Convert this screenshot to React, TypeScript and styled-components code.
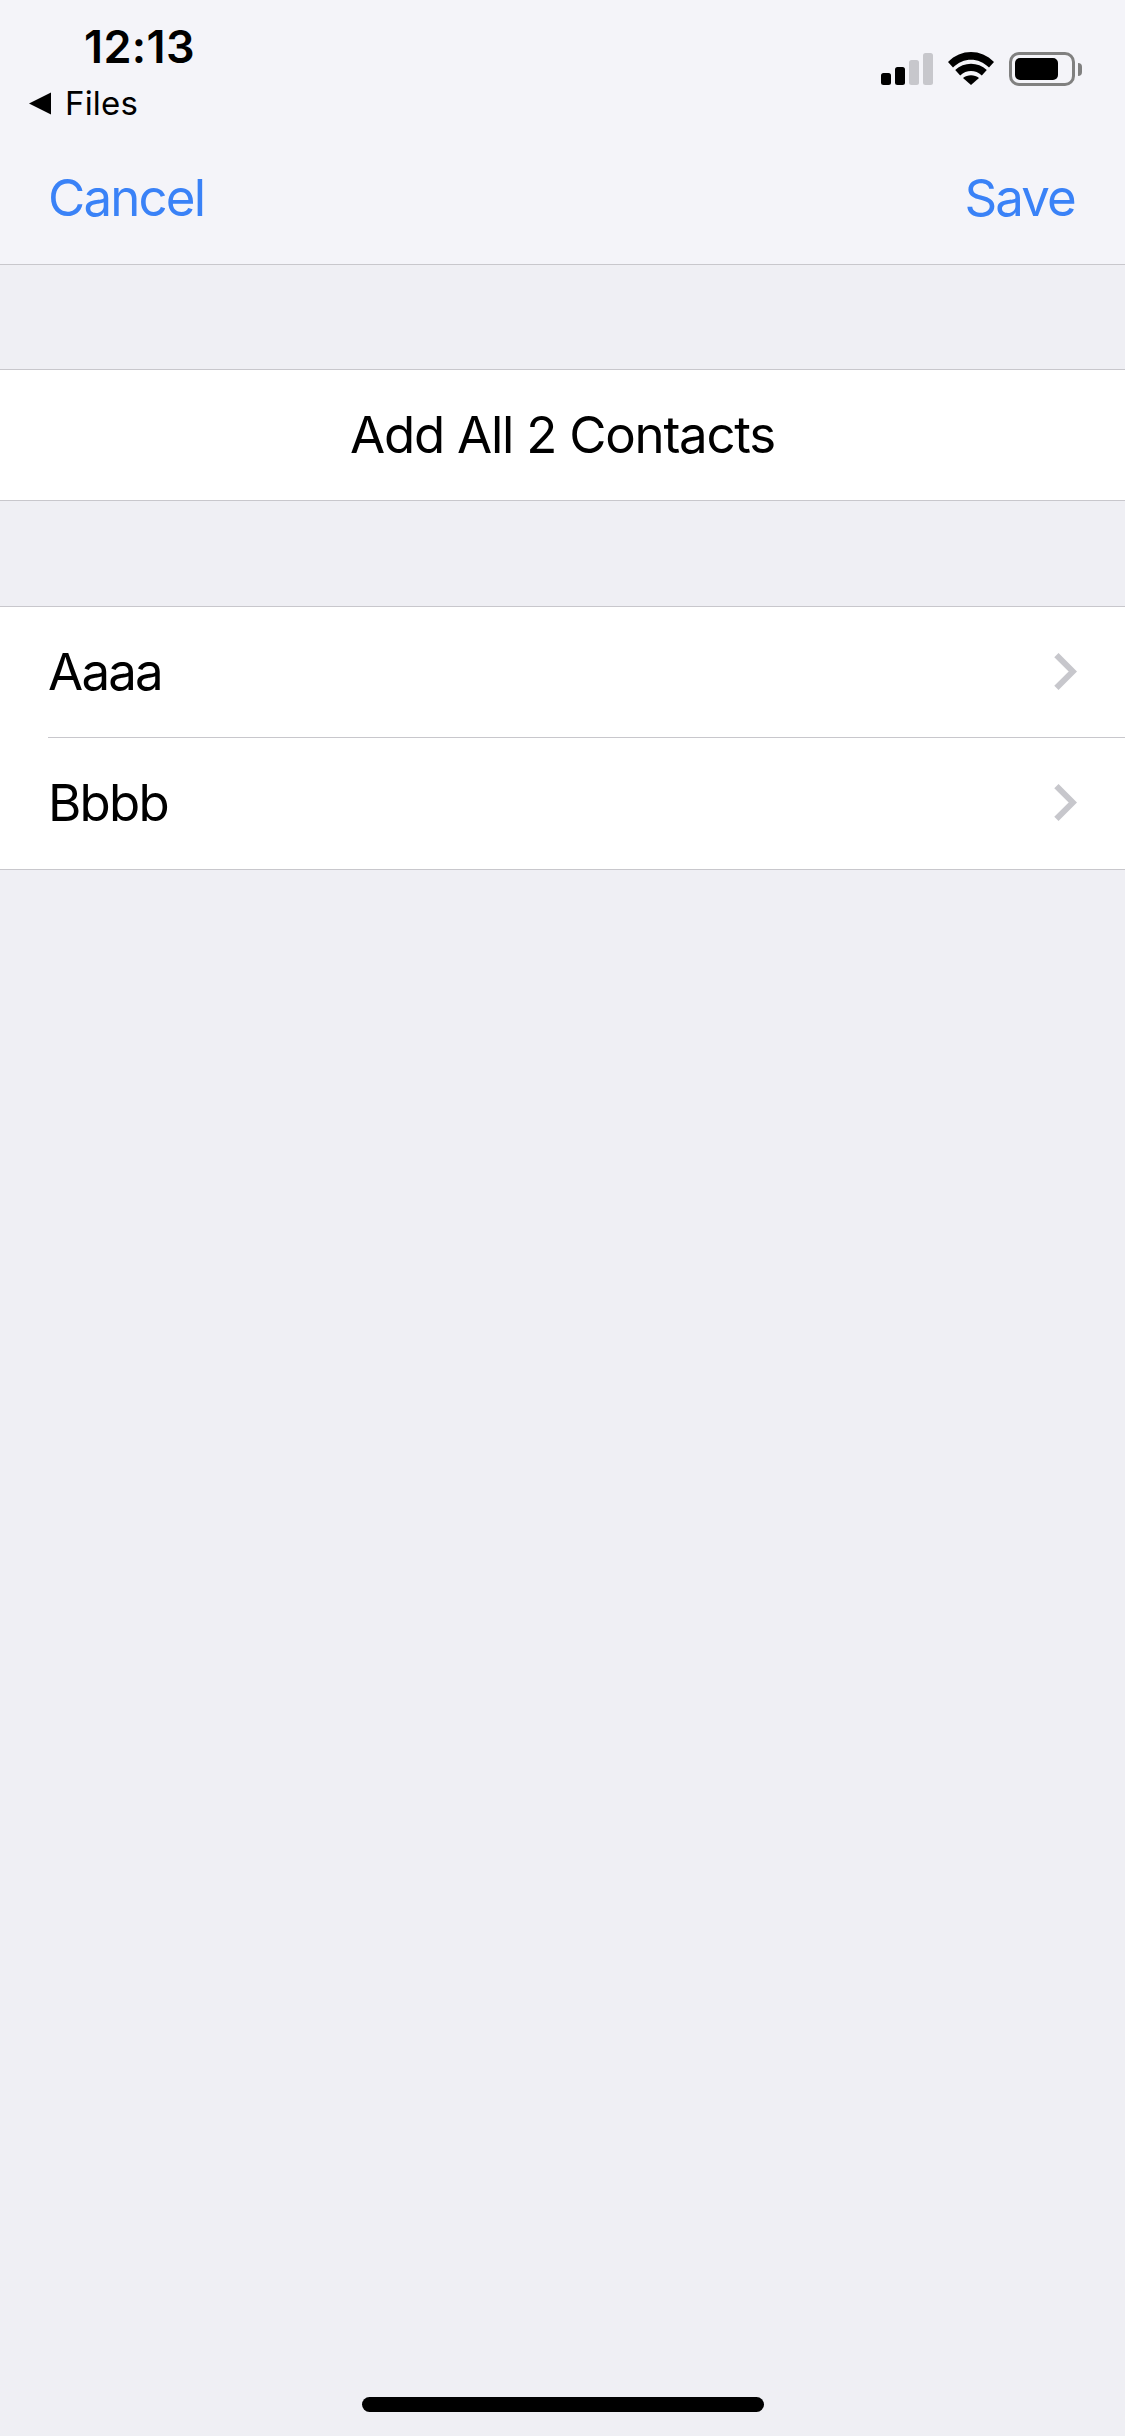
import styled, { createGlobalStyle } from "styled-components";

const GlobalStyle = createGlobalStyle`
  html, body {
    margin: 0;
    padding: 0;
    background: #efeff4;
  }
`;

const contacts = ["Aaaa", "Bbbb"];
const signalBars = [
  { height: 12, on: true },
  { height: 18, on: true },
  { height: 25, on: false },
  { height: 32, on: false },
];

export default function App() {
  return (
    <Page>
      <GlobalStyle />
      <Header>
        <StatusBar>
          <StatusLeft>
            <Time>12:13</Time>
            <BackLink>
              <svg width="23" height="23" viewBox="0 0 23 23">
                <path d="M0 11.5 L22 0.5 V22.5 Z" fill="#000" />
              </svg>
              <BackLabel>Files</BackLabel>
            </BackLink>
          </StatusLeft>
          <StatusRight>
            <Signal>
              {signalBars.map((bar) => (
                <SignalBar key={bar.height} $height={bar.height} $on={bar.on} />
              ))}
            </Signal>
            <svg width="46" height="33" viewBox="0 0 46 33">
              <path d="M0 10 C13 -3.3 33 -3.3 46 10 L41 15.6 C30.5 5.2 15.5 5.2 5 15.6 Z" fill="#000" />
              <path d="M7.2 18 C16 9.7 30 9.7 38.8 18 L33.8 23.4 C27.5 17.6 18.5 17.6 12.2 23.4 Z" fill="#000" />
              <path d="M15 26 C19.5 22.2 26.5 22.2 31 26 L23 33 Z" fill="#000" />
            </svg>
            <Battery>
              <BatteryShell>
                <BatteryLevel />
              </BatteryShell>
              <BatteryTip />
            </Battery>
          </StatusRight>
        </StatusBar>
        <NavBar>
          <NavButton>Cancel</NavButton>
          <NavButton>Save</NavButton>
        </NavBar>
      </Header>

      <Section>
        <CenterRow>Add All 2 Contacts</CenterRow>
      </Section>

      <Section>
        {contacts.map((name) => (
          <ContactRow key={name}>
            <ContactName>{name}</ContactName>
            <svg width="23" height="37" viewBox="0 0 23 37">
              <path d="M2.4 2.1 L18.8 18.5 L2.4 34.9" fill="none" stroke="#c7c7cc" strokeWidth="6" />
            </svg>
          </ContactRow>
        ))}
      </Section>

      <HomeBar />
    </Page>
  );
}

const Page = styled.div`
  position: relative;
  width: 1125px;
  height: 2436px;
  overflow: hidden;
  background: #efeff4;
  color: #000;
  font-family: Inter, "Liberation Sans", sans-serif;
`;

const Header = styled.header`
  height: 264px;
  background: #f4f4f9;
  border-bottom: 1px solid #c8c7cc;
`;

const StatusBar = styled.div`
  height: 130px;
  display: flex;
  justify-content: space-between;
`;

const StatusLeft = styled.div`
  padding: 20px 0 0 29px;
  display: flex;
  flex-direction: column;
`;

const Time = styled.div`
  margin-left: 55px;
  font-size: 45px;
  line-height: 54px;
  font-weight: 600;
  letter-spacing: 0.4px;
`;

const BackLink = styled.div`
  display: flex;
  align-items: center;
  gap: 13px;
  margin-top: 9px;
`;

const BackLabel = styled.span`
  font-size: 33px;
  line-height: 40px;
  letter-spacing: 0.2px;
`;

const StatusRight = styled.div`
  padding: 52px 43px 0 0;
  display: flex;
  align-items: flex-start;
  gap: 15px;
`;

const Signal = styled.div`
  display: flex;
  align-items: flex-end;
  gap: 4px;
  height: 33px;
`;

const SignalBar = styled.span<{ $height: number; $on: boolean }>`
  width: 10px;
  height: ${(p) => p.$height}px;
  border-radius: 2.5px;
  background: ${(p) => (p.$on ? "#000" : "#c7c7cc")};
`;

const Battery = styled.div`
  display: flex;
  align-items: center;
  gap: 3px;
  height: 34px;
`;

const BatteryShell = styled.div`
  box-sizing: border-box;
  width: 66px;
  height: 34px;
  padding: 0 3px;
  display: flex;
  align-items: center;
  border: 3px solid #808080;
  border-radius: 10px;
`;

const BatteryLevel = styled.div`
  width: 43px;
  height: 22px;
  border-radius: 5px;
  background: #000;
`;

const BatteryTip = styled.span`
  width: 4px;
  height: 13px;
  border-radius: 0 4px 4px 0;
  background: #808080;
`;

const NavBar = styled.nav`
  height: 134px;
  box-sizing: border-box;
  padding: 37px 50px 0 48px;
  display: flex;
  justify-content: space-between;
  align-items: flex-start;
`;

const NavButton = styled.span`
  font-size: 51px;
  line-height: 62px;
  letter-spacing: -1.85px;
  color: #3a82f7;
`;

const Section = styled.section`
  margin-top: 105px;
  background: #fff;
  border-top: 1px solid #c8c7cc;
  border-bottom: 1px solid #c8c7cc;

  &:first-of-type {
    margin-top: 104px;
  }
`;

const CenterRow = styled.div`
  height: 130px;
  box-sizing: border-box;
  padding-bottom: 2px;
  display: flex;
  align-items: center;
  justify-content: center;
  font-size: 51px;
  letter-spacing: -1.25px;
`;

const ContactRow = styled.div`
  box-sizing: border-box;
  height: 130px;
  margin-left: 48px;
  padding: 0 48px 2px 0;
  display: flex;
  align-items: center;
  justify-content: space-between;

  & + & {
    height: 132px;
    border-top: 1px solid #c8c7cc;
  }
`;

const ContactName = styled.span`
  font-size: 51px;
  letter-spacing: -1.8px;
`;

const HomeBar = styled.div`
  position: absolute;
  left: 362px;
  bottom: 24px;
  width: 402px;
  height: 15px;
  border-radius: 8px;
  background: #000;
`;
